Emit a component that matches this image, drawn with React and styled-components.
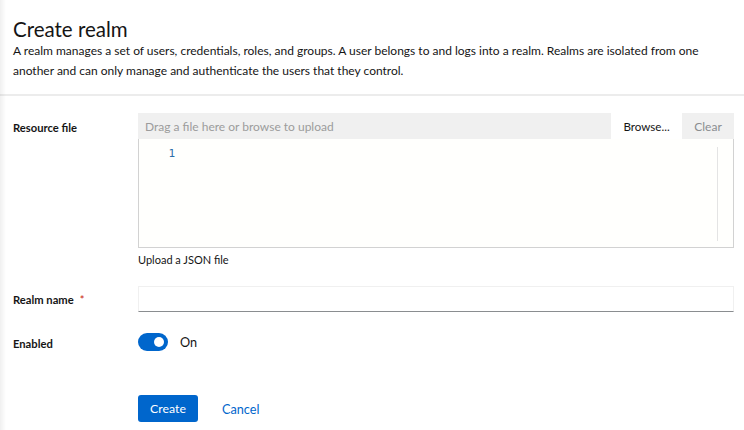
import styled, { createGlobalStyle } from "styled-components";

const GlobalStyle = createGlobalStyle`
  body {
    margin: 0;
    background: #fff;
    font-family: Lato, "Liberation Sans", sans-serif;
    color: #151515;
  }
`;

const Page = styled.div`
  width: 744px;
  min-height: 430px;
  position: relative;
  background: #fff;
  &::before {
    content: "";
    position: absolute;
    left: 0;
    top: 0;
    bottom: 0;
    width: 6px;
    background: linear-gradient(to right, rgba(0, 0, 0, 0.06), rgba(0, 0, 0, 0));
  }
`;

const Header = styled.section`
  padding: 18px 13px 13px;
  border-bottom: 2px solid #ececec;
`;

const Title = styled.h1`
  margin: 0;
  font-size: 20.5px;
  font-weight: 400;
  line-height: 23px;
`;

const Description = styled.p`
  margin: 0;
  font-size: 12px;
  line-height: 20px;
  color: #151515;
`;

const Form = styled.form`
  padding: 17px 10px 0 13px;
  display: grid;
  grid-template-columns: 125px 1fr;
  row-gap: 18px;
`;

const Label = styled.label`
  font-size: 11.2px;
  line-height: 14px;
  font-weight: 700;
  padding-top: ${(p) => p.$top || 8}px;
  color: #151515;
`;

const Required = styled.span`
  color: #c9190b;
  margin-left: 6px;
  font-weight: 400;
`;

const Field = styled.div`
  display: flex;
  flex-direction: column;
`;

const UploadBar = styled.div`
  display: flex;
  height: 26px;
  background: #f0f0f0;
`;

const Placeholder = styled.div`
  flex: 1;
  display: flex;
  align-items: center;
  padding-left: 7px;
  font-size: 12px;
  color: #9c9c9c;
`;

const BarButton = styled.button`
  border: none;
  height: 26px;
  width: ${(p) => p.$w}px;
  padding: 0;
  background: ${(p) => (p.$active ? "#fff" : "transparent")};
  color: ${(p) => (p.$active ? "#151515" : "#8a8d90")};
  font-family: inherit;
  font-size: ${(p) => (p.$active ? 11.6 : 12)}px;
  cursor: pointer;
`;

const Editor = styled.div`
  height: 108px;
  border: 1px solid #d2d2d2;
  border-top: none;
  background: #fffffd;
  display: flex;
  position: relative;
`;

const Gutter = styled.div`
  width: 36px;
  padding-top: 8px;
  text-align: right;
  font-family: "DejaVu Sans Mono", "Liberation Mono", monospace;
  font-size: 11px;
  color: #2b6ea8;
`;

const ScrollTrack = styled.div`
  position: absolute;
  right: 15px;
  top: 8px;
  bottom: 6px;
  width: 1px;
  background: #e4e4e4;
`;

const Helper = styled.div`
  margin-top: 4px;
  font-size: 11px;
  line-height: 16px;
  color: #151515;
`;

const TextInput = styled.input`
  height: 26px;
  box-sizing: border-box;
  border: 1px solid #f0f0f0;
  border-bottom-color: #8a8d90;
  background: #fff;
  outline: none;
`;

const SwitchRow = styled.div`
  display: flex;
  align-items: center;
  gap: 12px;
  padding-top: 2px;
`;

const Switch = styled.span`
  width: 30px;
  height: 18px;
  border-radius: 9px;
  background: #0066cc;
  position: relative;
  &::after {
    content: "";
    position: absolute;
    right: 4px;
    top: 4px;
    width: 10px;
    height: 10px;
    border-radius: 50%;
    background: #fff;
  }
`;

const SwitchText = styled.span`
  font-size: 12.7px;
  color: #151515;
`;

const Actions = styled.div`
  grid-column: 2;
  display: flex;
  align-items: center;
  gap: 8px;
  margin-top: 26px;
`;

const PrimaryButton = styled.button`
  height: 27px;
  width: 60px;
  padding: 0;
  border: none;
  border-radius: 3px;
  background: #0066cc;
  color: #fff;
  font-family: inherit;
  font-size: 12.3px;
`;

const LinkButton = styled.button`
  border: none;
  background: none;
  color: #0066cc;
  font-family: inherit;
  font-size: 12.7px;
  padding: 0 16px;
`;

export default function App() {
  return (
    <Page>
      <GlobalStyle />
      <Header>
        <Title>Create realm</Title>
        <Description>
          A realm manages a set of users, credentials, roles, and groups. A user belongs to and logs into a realm. Realms
          are isolated from one another and can only manage and authenticate the users that they control.
        </Description>
      </Header>
      <Form>
        <Label $top={8}>Resource file</Label>
        <Field>
          <UploadBar>
            <Placeholder>Drag a file here or browse to upload</Placeholder>
            <BarButton type="button" $active $w={71}>
              Browse...
            </BarButton>
            <BarButton type="button" $w={52}>
              Clear
            </BarButton>
          </UploadBar>
          <Editor>
            <Gutter>1</Gutter>
            <ScrollTrack />
          </Editor>
          <Helper>Upload a JSON file</Helper>
        </Field>

        <Label $top={7}>
          Realm name<Required>*</Required>
        </Label>
        <TextInput />

        <Label $top={7}>Enabled</Label>
        <SwitchRow>
          <Switch />
          <SwitchText>On</SwitchText>
        </SwitchRow>

        <Actions>
          <PrimaryButton type="button">Create</PrimaryButton>
          <LinkButton type="button">Cancel</LinkButton>
        </Actions>
      </Form>
    </Page>
  );
}
